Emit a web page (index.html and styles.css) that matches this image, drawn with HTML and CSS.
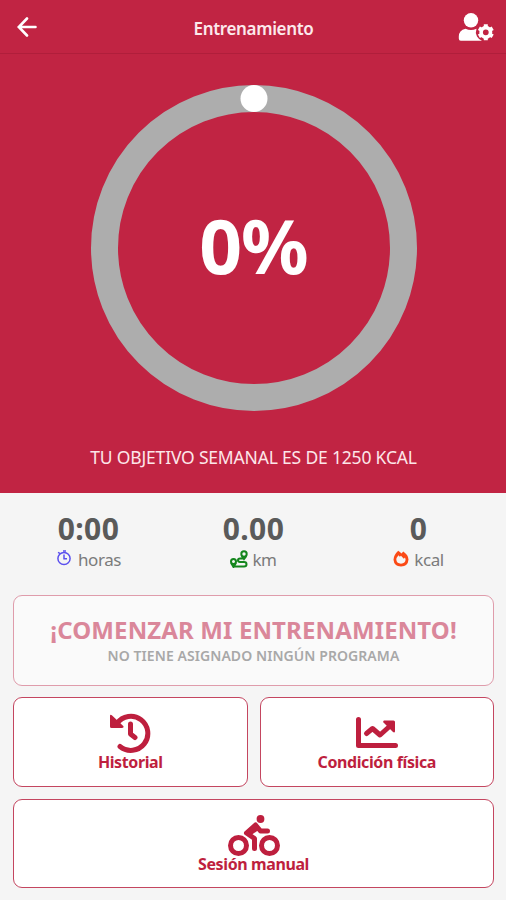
FILE: index.html
```
<!DOCTYPE html>
<html lang="es">
<head>
    <meta charset="UTF-8">
    <meta content="width=device-width, initial-scale=1.0" name="viewport">
    <title>Entrenamiento</title>
    <link rel="stylesheet" href="styles.css">
</head>
<body>

<!-- Top bar -->
<header class="topbar">
    <svg class="icon-back" viewBox="0 0 20 20">
        <path d="M18.5 10H2M10 1.5L1.8 10L10 18.5"/>
    </svg>
    <h1 class="title">Entrenamiento</h1>
    <svg class="icon-user" viewBox="0 0 36 30">
        <circle cx="13" cy="7.3" r="7.2"/>
        <path d="M7.5 15.8Q13 18.2 18.5 15.8Q17 19.5 19 23.5Q21 26.8 24 27.8H2.8Q.8 27.8.8 25.5V23.5Q.8 17.5 7.5 15.8Z"/>
        <circle class="gear" cx="27.8" cy="19.3" r="4.7"/>
        <path class="teeth" d="M27.8 11.3V15M27.8 23.6V27.3M20.9 15.3L24 17.1M31.6 21.5L34.7 23.3M20.9 23.3L24 21.5M31.6 17.1L34.7 15.3"/>
    </svg>
</header>

<!-- Weekly goal -->
<section class="goal">
    <div class="ring">
        <svg class="ring-svg" viewBox="0 0 326 326">
            <circle class="track" cx="163" cy="163" r="149.5"/>
            <circle class="knob" cx="163" cy="13.5" r="13.5"/>
        </svg>
        <span class="percent">0%</span>
    </div>
    <p class="goal-text">TU OBJETIVO SEMANAL ES DE 1250 KCAL</p>
</section>

<!-- Stats -->
<section class="stats">
    <div class="stat">
        <b class="value">0:00</b>
        <span class="unit unit-hours">
            <svg class="icon-clock" viewBox="0 0 16 16">
                <circle cx="8" cy="8.5" r="6.1"/>
                <path d="M8 4.5V8.8H11M2 2.4L4.3 3.6M7 1H10"/>
            </svg>
            horas
        </span>
    </div>
    <div class="stat">
        <b class="value">0.00</b>
        <span class="unit unit-km">
            <svg class="icon-route" viewBox="0 0 18 18">
                <circle cx="14" cy="4" r="2.7"/>
                <circle cx="3.5" cy="11.5" r="2.5"/>
                <path d="M1.2 13L3.5 17L5.8 13M12 6.2L14 9L16.2 6.2M13.5 8.5H10Q8 8.5 8 10.2T10 12H14Q16.5 12 16.5 14.2T14 16.6H4"/>
            </svg>
            km
        </span>
    </div>
    <div class="stat">
        <b class="value">0</b>
        <span class="unit unit-kcal">
            <svg class="icon-fire" viewBox="0 0 16 17">
                <path fill-rule="evenodd" d="M5.2.8Q7.5 2.2 8.5 3.5Q9.3 2.3 10.3 1.5Q15.5 5.2 15.5 9.6Q15 16.5 8 16.5Q1 16.2.5 9.8Q.5 5.2 5.2.8ZM5.5 5.2Q3.3 7.5 3.3 9.8Q3.8 13.6 8 13.7Q12.4 13.4 12.6 9.6L12 7.5L10.8 8.8L8 5.8L6.8 6.8Z"/>
            </svg>
            kcal
        </span>
    </div>
</section>

<!-- Actions -->
<main class="actions">
    <button class="card card-start" disabled>
        <span class="start-title">¡COMENZAR MI ENTRENAMIENTO!</span>
        <span class="start-note">NO TIENE ASIGNADO NINGÚN PROGRAMA</span>
    </button>
    <button class="card">
        <svg class="icon-history" viewBox="0 0 42 40">
            <path class="line" d="M8 10.5A17 17 0 1 1 11 33.5M21.5 11V21L26 24.5"/>
            <path class="solid" d="M1 3Q1 1 2.8 2.2L14.5 13.2Q15 15 13 15H2.5Q1 15 1 13.5Z"/>
        </svg>
        <span class="label label-history">Historial</span>
    </button>
    <button class="card">
        <svg class="icon-chart" viewBox="0 0 42 32">
            <path class="line" d="M2.5 2.5V28.5H39.5"/>
            <path class="line zigzag" d="M10.5 16.5L16.5 11.5L24 18L34 9"/>
            <path class="solid" d="M28 3.5H37.5Q39 3.5 39 5V14.5Q38.5 16 37 15L27.5 5.5Q26.5 4 28 3.5Z"/>
        </svg>
        <span class="label label-fitness">Condición física</span>
    </button>
    <button class="card card-wide">
        <svg class="icon-bike" viewBox="0 0 52 41">
            <circle class="line" cx="10.5" cy="30.5" r="8"/>
            <circle class="line" cx="41.5" cy="30.5" r="8"/>
            <circle class="solid" cx="32.5" cy="4" r="3.9"/>
            <path class="body" d="M26.5 33.5V23.5L18.5 18L27.5 10L32.5 16H39.5"/>
            <path class="solid" d="M16 18.5L27 8L32 14L24 19.5Z"/>
        </svg>
        <span class="label label-manual">Sesión manual</span>
    </button>
</main>

</body>
</html>
```

FILE: styles.css
```
* {
    box-sizing: border-box;
}
body {
    margin: 0;
    height: 900px;
    font-family: "Noto Sans", "Open Sans", sans-serif;
    background-color: #f5f5f5;
    color: #555;
}
.topbar {
    display: flex;
    align-items: center;
    justify-content: space-between;
    height: 54px;
    padding: 0 12px 0 17px;
    background-color: #c12443;
    border-bottom: 1px solid #b01e3b;
}
.icon-back {
    width: 20px;
    height: 20px;
    margin-right: 12px;
    fill: none;
    stroke: white;
    stroke-width: 2.6;
    stroke-linecap: round;
}
.title {
    margin: 4px 0 0;
    font-size: 17px;
    letter-spacing: -0.35px;
    font-weight: 600;
    color: #fce9ec;
}
.icon-user {
    width: 36px;
    height: 30px;
    margin-top: 2px;
    fill: white;
}
.gear {
    fill: none;
    stroke: white;
    stroke-width: 3.6;
}
.teeth {
    stroke: white;
    stroke-width: 4;
}
.goal {
    height: 439px;
    padding: 31px 0 0 1px;
    background-color: #c12443;
    text-align: center;
}
.ring {
    display: grid;
    place-items: center;
    width: 326px;
    height: 326px;
    margin: 0 auto;
}
.ring-svg,
.percent {
    grid-area: 1 / 1;
}
.ring-svg {
    width: 326px;
    height: 326px;
}
.track {
    fill: none;
    stroke: #adadad;
    stroke-width: 27;
}
.knob {
    fill: white;
}
.percent {
    padding-bottom: 5px;
    font-size: 75px;
    line-height: 75px;
    font-weight: bold;
    color: white;
    letter-spacing: -1px;
}
.goal-text {
    margin: 34px 0 0;
    font-size: 17.5px;
    line-height: 24px;
    letter-spacing: -0.18px;
    color: #fde6e9;
}
.stats {
    display: grid;
    grid-template-columns: repeat(3, 1fr);
    height: 102px;
    padding: 18px 5px 0 6px;
}
.stat {
    display: flex;
    flex-direction: column;
    align-items: center;
}
.value {
    font-size: 30px;
    line-height: 35px;
    letter-spacing: 0.4px;
    color: #5a5a5a;
}
.unit {
    display: flex;
    align-items: center;
    height: 26px;
    font-size: 17px;
    letter-spacing: -0.4px;
    color: #7b7b7b;
}
.icon-clock {
    width: 16px;
    height: 16px;
    margin: -2px 6px 0 0;
    fill: none;
    stroke: #5b50ee;
    stroke-width: 1.5;
}
.icon-route {
    width: 18px;
    height: 18px;
    margin: -1px 4px 0 0;
    fill: none;
    stroke: #14861d;
    stroke-width: 2;
}
.icon-fire {
    width: 16px;
    height: 17px;
    margin: -1px 5px 0 0;
    fill: #fb4a16;
}
.actions {
    display: grid;
    grid-template-columns: 1fr 1fr;
    grid-template-rows: 91px 90px 90px;
    gap: 11px 12px;
    padding: 0 12px 0 13px;
}
.card {
    display: flex;
    flex-direction: column;
    align-items: center;
    padding: 0;
    font-family: inherit;
    color: #be1f3e;
    background-color: white;
    border: 1px solid #c44660;
    border-radius: 9px;
}
.card-start {
    grid-column: span 2;
    padding-top: 17px;
    background-color: #fafafa;
    border-color: #df9cab;
}
.card-wide {
    grid-column: span 2;
    margin-top: 1px;
}
.start-title {
    font-size: 24px;
    line-height: 33px;
    font-weight: bold;
    letter-spacing: 0.13px;
    color: #da879a;
}
.start-note {
    font-size: 14px;
    line-height: 20px;
    font-weight: 600;
    letter-spacing: 0.07px;
    color: #a8a8a8;
}
.label {
    font-size: 16px;
    line-height: 20px;
    font-weight: bold;
    letter-spacing: -0.4px;
}
.line,
.body {
    fill: none;
    stroke: #be1f3e;
    stroke-width: 5;
    stroke-linecap: round;
    stroke-linejoin: round;
}
.solid {
    fill: #be1f3e;
}
.icon-history {
    width: 42px;
    height: 40px;
    margin: 15px 0 -1px;
}
.icon-chart {
    width: 42px;
    height: 32px;
    margin: 19px 0 3px;
}
.icon-bike {
    width: 52px;
    height: 41px;
    margin: 15px 0 -2px;
}
```
